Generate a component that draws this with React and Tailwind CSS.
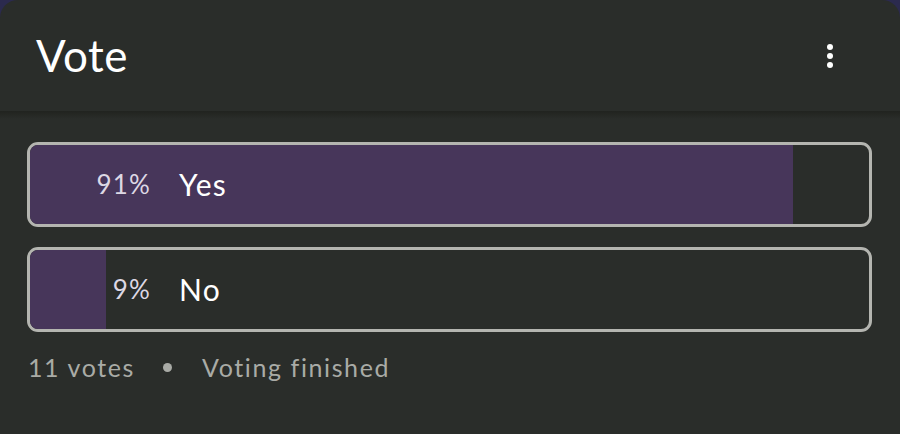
import React from 'react';

const options = [
  { label: 'Yes', pct: 91 },
  { label: 'No', pct: 9 },
];

export default function App() {
  return (
    <div className="w-[900px] h-[434px] bg-[#2b2a4e] overflow-hidden" style={{ fontFamily: 'Lato, "Noto Sans", sans-serif' }}>
      <div className="h-full bg-[#2a2d2a] rounded-t-[18px] flex flex-col">
        {/* header */}
        <div className="h-[111px] flex items-center justify-between pl-[36px] pr-[67px]">
          <h1 className="text-[44px] leading-none text-white tracking-[0.5px] pb-[2px]">Vote</h1>
          <button className="flex flex-col gap-[3px] items-center">
            <span className="w-[6px] h-[6px] rounded-full bg-white" />
            <span className="w-[6px] h-[6px] rounded-full bg-white" />
            <span className="w-[6px] h-[6px] rounded-full bg-white" />
          </button>
        </div>
        <div className="h-[8px] bg-gradient-to-b from-[#21231f] to-[#2a2d2a]" />

        {/* options */}
        <div className="flex flex-col gap-[20px] pl-[27px] pr-[28px] pt-[23px]">
          {options.map((o) => (
            <div
              key={o.label}
              className="relative h-[85px] rounded-[11px] border-[3px] border-[#b4b5b0] overflow-hidden"
            >
              <div className="absolute inset-y-0 left-0 bg-[#47365a]" style={{ width: `${o.pct}%` }} />
              <div className="relative h-full flex items-center">
                <span className="w-[121px] text-right text-[26px] text-[#ddd8e4] tracking-[1.2px]">{o.pct}%</span>
                <span className="ml-[28px] text-[30px] text-white tracking-[1.2px]">{o.label}</span>
              </div>
            </div>
          ))}
        </div>

        {/* footer */}
        <div className="flex items-center pl-[28px] pt-[17px] text-[25px] text-[#a9aba6] tracking-[1.6px]">
          <span>11 votes</span>
          <span className="ml-[28px] w-[9px] h-[9px] rounded-full bg-[#a9aba6]" />
          <span className="ml-[30px]">Voting finished</span>
        </div>
      </div>
    </div>
  );
}
